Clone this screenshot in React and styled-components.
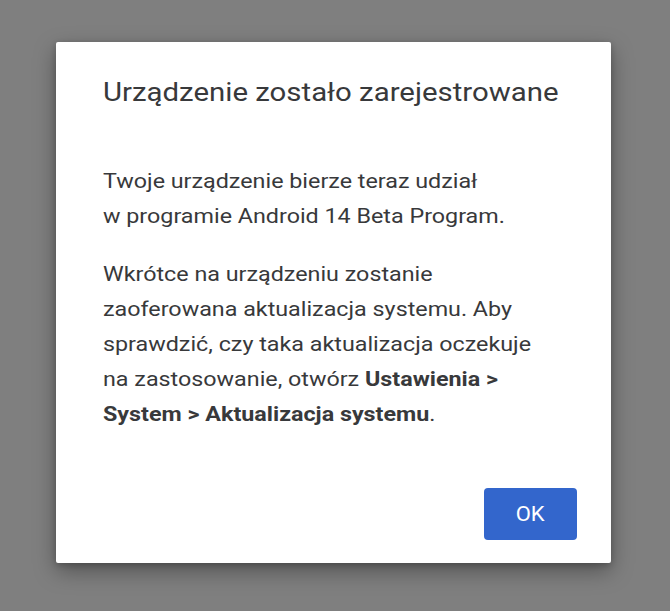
import React from "react";
import styled, { createGlobalStyle } from "styled-components";

const Global = createGlobalStyle`
  html, body { margin: 0; padding: 0; background: #7f7f7f; }
  body { font-family: Roboto, "Noto Sans", Arial, sans-serif; }
  * { box-sizing: border-box; }
`;

const Page = styled.div`
  width: 670px;
  height: 611px;
  background: #7f7f7f;
  padding: 42px 59px 0 56px;
`;

const Dialog = styled.div`
  width: 555px;
  height: 521px;
  background: #ffffff;
  border-radius: 2px;
  box-shadow: 0 8px 22px rgba(0, 0, 0, 0.35), 0 2px 6px rgba(0, 0, 0, 0.2);
  padding: 35px 34px 23px 47px;
  display: flex;
  flex-direction: column;
`;

/* the reference text is rendered horizontally widened */
const Title = styled.h1`
  margin: 0 0 55px;
  font-size: 25px;
  line-height: 32px;
  font-weight: 400;
  white-space: nowrap;
  color: #38393b;
  transform: scaleX(1.175);
  transform-origin: left center;
`;

const Paragraph = styled.p`
  margin: 0 0 ${(p) => (p.$last ? 0 : 23)}px;
  font-size: 20px;
  line-height: 35px;
  font-weight: 400;
  white-space: nowrap;
  color: #38393b;
  transform: scaleX(1.165);
  transform-origin: left center;
`;

const Strong = styled.b`
  font-weight: 700;
`;

const Actions = styled.div`
  margin-top: auto;
  display: flex;
  justify-content: flex-end;
`;

const Button = styled.button`
  width: 93px;
  height: 52px;
  border: none;
  border-radius: 4px;
  background: #3366cc;
  color: #ffffff;
  font-family: Roboto, "Noto Sans", Arial, sans-serif;
  font-size: 20px;
  font-weight: 400;
  padding: 0;
  display: flex;
  align-items: center;
  justify-content: center;
  cursor: pointer;
`;

const ButtonLabel = styled.span`
  display: inline-block;
  transform: scaleX(1.1);
`;

export default function App() {
  return (
    <>
      <Global />
      <Page>
        <Dialog>
          <Title>Urządzenie zostało zarejestrowane</Title>
          <Paragraph>
            Twoje urządzenie bierze teraz udział
            <br />
            w programie Android 14 Beta Program.
          </Paragraph>
          <Paragraph $last>
            Wkrótce na urządzeniu zostanie
            <br />
            zaoferowana aktualizacja systemu. Aby
            <br />
            sprawdzić, czy taka aktualizacja oczekuje
            <br />
            na zastosowanie, otwórz <Strong>Ustawienia &gt;</Strong>
            <br />
            <Strong>System &gt; Aktualizacja systemu</Strong>.
          </Paragraph>
          <Actions>
            <Button>
              <ButtonLabel>OK</ButtonLabel>
            </Button>
          </Actions>
        </Dialog>
      </Page>
    </>
  );
}
